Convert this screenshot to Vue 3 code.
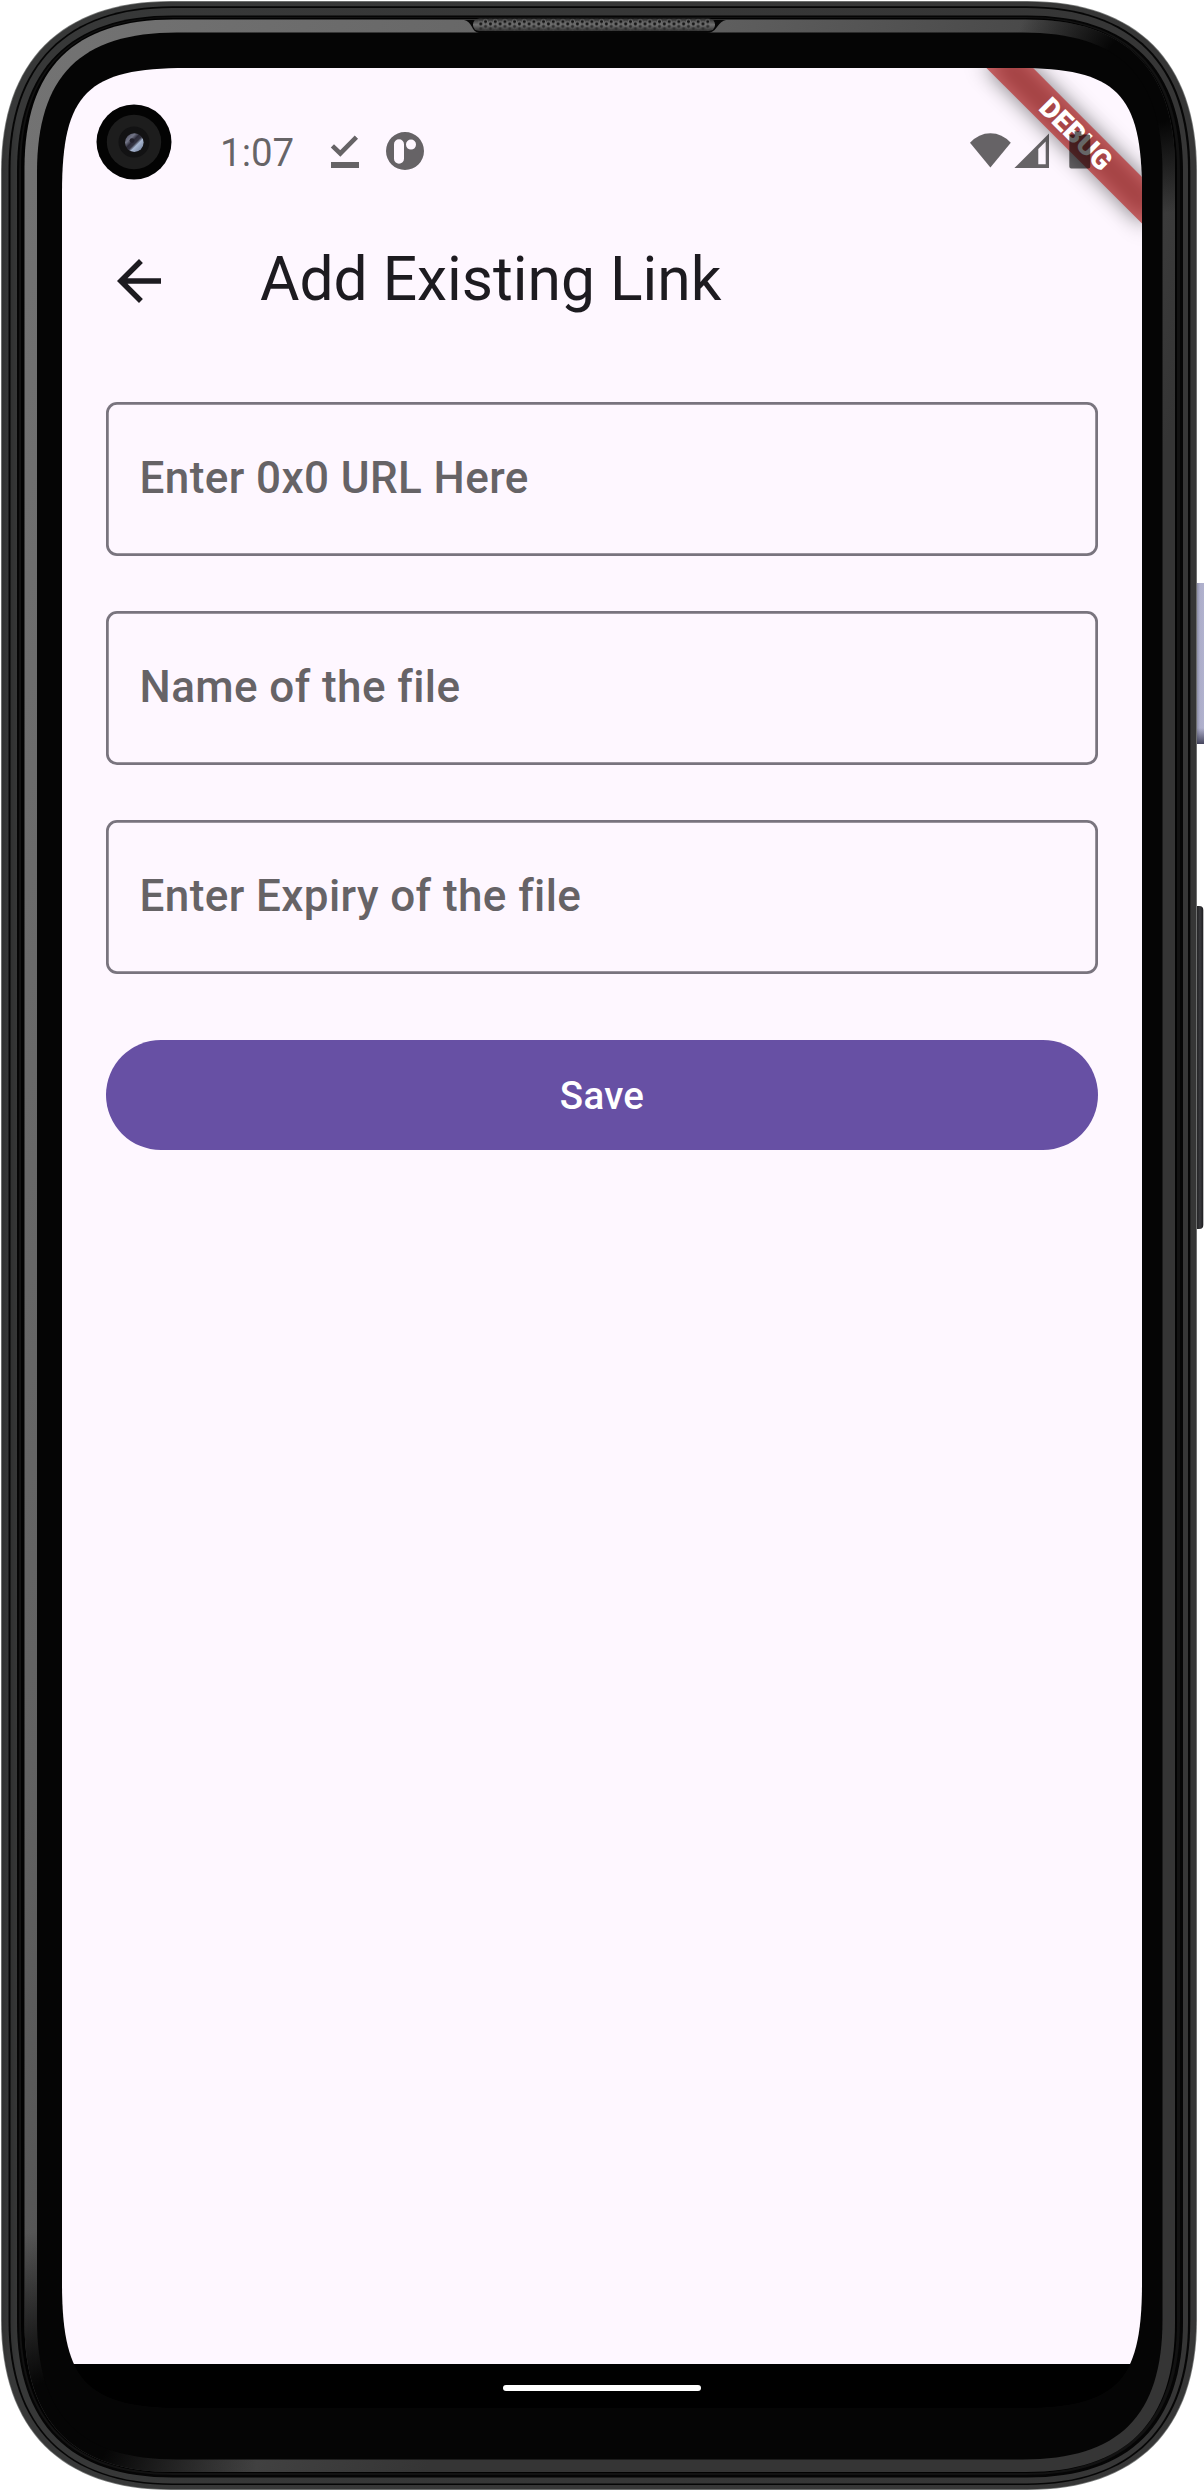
<script setup>
const fields = ['Enter 0x0 URL Here', 'Name of the file', 'Enter Expiry of the file']

// Closed contour with continuous-curvature corners: r is the corner extent, c the control offset.
function contour(l, t, r, b, e, k) {
  const c = e * k
  return `M${l + e} ${t}H${r - e}C${r - c} ${t} ${r} ${t + c} ${r} ${t + e}V${b - e}C${r} ${b - c} ${r - c} ${b} ${r - e} ${b}H${l + e}C${l + c} ${b} ${l} ${b - c} ${l} ${b - e}V${t + e}C${l} ${t + c} ${l + c} ${t} ${l + e} ${t}Z`
}

const rings = [
  { d: contour(1, 1, 1197, 2490, 170, 0.354), fill: '#7d7f7e' },
  { d: contour(1.8, 1.8, 1196.2, 2489.2, 169, 0.354), fill: 'url(#shell)' },
  { d: contour(8.5, 6.3, 1190.3, 2485, 164, 0.352), fill: '#060606' },
  { d: contour(10.5, 8, 1188, 2483.5, 162, 0.35), fill: 'url(#shell)' },
  { d: contour(17, 15.5, 1183, 2477.5, 156, 0.34), fill: '#050505' },
  { d: contour(19, 17, 1180, 2475, 154, 0.34), fill: '#121212' },
  { d: contour(21, 18, 1177, 2473, 152, 0.34), fill: '#020202' },
  { d: contour(24.5, 19.5, 1175, 2472, 149, 0.33), fill: 'url(#rim)' },
  { d: contour(24.5, 19.5, 1175, 2472, 149, 0.33), fill: 'url(#fadeTR)' },
  { d: contour(24.5, 19.5, 1175, 2472, 149, 0.33), fill: 'url(#fadeBL)' },
  { d: contour(37, 32.5, 1162.5, 2459.5, 140, 0.31), fill: '#050505' },
]
</script>

<template>
  <div class="device">
    <svg class="shell" width="1204" height="2491" viewBox="0 0 1204 2491">
      <defs>
        <linearGradient id="shell" x1="0" y1="0" x2="1" y2="0">
          <stop offset="0" stop-color="#303131" />
          <stop offset=".006" stop-color="#373838" />
          <stop offset="1" stop-color="#363636" />
        </linearGradient>
        <linearGradient id="rim" gradientUnits="userSpaceOnUse" x1="24" y1="0" x2="1175" y2="420">
          <stop offset="0" stop-color="#747474" />
          <stop offset=".5" stop-color="#626262" />
          <stop offset="1" stop-color="#353535" />
        </linearGradient>
        <radialGradient id="fadeTR" gradientUnits="userSpaceOnUse" cx="1152" cy="74" r="140">
          <stop offset="0" stop-color="#050505" />
          <stop offset=".35" stop-color="#050505" />
          <stop offset="1" stop-color="#050505" stop-opacity="0" />
        </radialGradient>
        <radialGradient id="fadeBL" gradientUnits="userSpaceOnUse" cx="60" cy="2430" r="200">
          <stop offset="0" stop-color="#050505" />
          <stop offset=".25" stop-color="#050505" />
          <stop offset="1" stop-color="#050505" stop-opacity="0" />
        </radialGradient>
        <linearGradient id="power" x1="0" y1="0" x2="1" y2="0">
          <stop offset="0" stop-color="#7d7d95" />
          <stop offset=".3" stop-color="#8e8fa8" />
          <stop offset=".5" stop-color="#adaeca" />
          <stop offset="1" stop-color="#b4b5d1" />
        </linearGradient>
        <linearGradient id="powerEnd" x1="0" y1="0" x2="0" y2="1">
          <stop offset="0" stop-color="#33334a" stop-opacity="0" />
          <stop offset="1" stop-color="#33334a" stop-opacity=".85" />
        </linearGradient>
        <linearGradient id="volume" x1="0" y1="0" x2="1" y2="0">
          <stop offset="0" stop-color="#222" />
          <stop offset=".6" stop-color="#29292b" />
          <stop offset=".75" stop-color="#39393d" />
          <stop offset="1" stop-color="#1c1c1e" />
        </linearGradient>
        <linearGradient id="grille" x1="0" y1="0" x2="0" y2="1">
          <stop offset="0" stop-color="#2c2c2c" />
          <stop offset=".5" stop-color="#707070" />
          <stop offset="1" stop-color="#303030" />
        </linearGradient>
        <pattern id="mesh" patternUnits="userSpaceOnUse" x="478.4" y="18.5" width="9.66" height="12">
          <g fill="#151515" stroke="#8c8c8c" stroke-width=".7">
            <circle cx="2.4" cy="5.4" r="2.1" />
            <circle cx="7.2" cy="3.1" r="2.1" />
            <circle cx="7.2" cy="8" r="1.9" fill="#2b2b2b" stroke="#626262" />
            <circle cx="2.4" cy="10.4" r="1.7" fill="#2b2b2b" stroke="#444" />
          </g>
        </pattern>
      </defs>
      <rect x="1193" y="583" width="14" height="161" rx="2" fill="url(#power)" />
      <rect x="1193" y="728" width="14" height="16" rx="2" fill="url(#powerEnd)" />
      <rect x="1190" y="906" width="13.3" height="323" rx="4" fill="url(#volume)" />
      <path v-for="(ring, i) in rings" :key="i" :d="ring.d" :fill="ring.fill" />
      <path d="M464 20H726Q721 21 717 27Q713 33 707 33H479Q474 32 472 27Q469 21 464 20Z" fill="#070707" />
      <rect x="473" y="18.5" width="242" height="12.5" rx="6" fill="url(#grille)" />
      <rect x="478.4" y="18.5" width="231.8" height="12" fill="url(#mesh)" />
    </svg>

    <main class="screen">
      <header class="status">
        <span class="clock">1:07</span>
        <svg class="done" width="30" height="36" viewBox="0 0 30 36">
          <path d="M2.4 12.8L10.3 20.4L26.4 4.2" fill="none" stroke="currentColor" stroke-width="4.6" />
          <path d="M1 29h28v6H1z" fill="currentColor" />
        </svg>
        <svg class="badge" width="38" height="38" viewBox="0 0 38 38">
          <path fill="currentColor" fill-rule="evenodd" d="M19 0a19 19 0 1 1 0 38a19 19 0 1 1 0-38zM13 7.2a5 5 0 0 0-5 5v14.6a5 5 0 0 0 10 0V12.2a5 5 0 0 0-5-5zM25 7.6a5 5 0 1 0 0 10a5 5 0 1 0 0-10z" />
        </svg>
        <svg class="system" width="122" height="40" viewBox="0 0 122 40">
          <path fill="currentColor" d="M0 12.8Q8.7 3.2 20.4 3.2T40.8 12.8L20.4 37.5Z" />
          <path fill="currentColor" fill-rule="evenodd" d="M44.4 38L79 3.6V38ZM68.3 19V34.2H75.7V11.6Z" />
          <path fill="currentColor" d="M104.6 1.3h6.8v3.2h6.9a2 2 0 0 1 2 2v30a2 2 0 0 1-2 2h-17a2 2 0 0 1-2-2v-30a2 2 0 0 1 2-2h3.3z" />
        </svg>
      </header>

      <nav class="appbar">
        <svg class="back" width="66" height="66" viewBox="0 0 24 24">
          <path fill="#1d1b20" d="M20 11H7.83l5.59-5.59L12 4l-8 8 8 8 1.41-1.41L7.83 13H20v-2z" />
        </svg>
        <h1>Add Existing Link</h1>
      </nav>

      <form class="form" @submit.prevent>
        <div v-for="label in fields" :key="label" class="field">{{ label }}</div>
        <button class="save" type="submit">Save</button>
      </form>

      <footer class="gesture"><i></i></footer>

      <div class="banner">
        <div class="banner-shadow"></div>
        <div class="banner-strip">DEBUG</div>
      </div>
    </main>

    <svg class="camera" width="76" height="76" viewBox="-38 -38 76 76">
      <defs>
        <linearGradient id="lens" x1="0" y1="0" x2="1" y2="1">
          <stop offset="0" stop-color="#3c3b4d" />
          <stop offset=".28" stop-color="#747789" />
          <stop offset=".42" stop-color="#2b2a38" />
          <stop offset=".54" stop-color="#343442" />
          <stop offset=".64" stop-color="#a9b8d2" />
          <stop offset="1" stop-color="#63708b" />
        </linearGradient>
      </defs>
      <circle r="37.5" fill="#030303" />
      <circle r="27.2" fill="#1d1d1d" />
      <circle r="15.5" fill="#121213" />
      <circle cx=".3" cy=".6" r="9.3" fill="url(#lens)" />
      <circle cx="-2" cy="-1.4" r="2.4" fill="#22212c" />
    </svg>
  </div>
</template>

<style>
body {
  margin: 0;
  background: #fff;
}
</style>

<style scoped>
.device {
  position: relative;
  box-sizing: border-box;
  width: 1204px;
  height: 2491px;
  padding: 68px 62px 83px;
  overflow: hidden;
  font-family: Roboto, "Liberation Sans", sans-serif;
}
.shell {
  position: absolute;
  inset: 0;
}
.screen {
  position: relative;
  display: flex;
  flex-direction: column;
  width: 1080px;
  height: 2340px;
  background: linear-gradient(#fef7ff 2296px, #000 2296px);
  clip-path: path("M125 0H955C1055 0 1080 25 1080 125V2215C1080 2315 1055 2340 955 2340H125C25 2340 0 2315 0 2215V125C0 25 25 0 125 0Z");
}
.status {
  position: relative;
  z-index: 2;
  box-sizing: border-box;
  display: flex;
  align-items: flex-start;
  height: 136px;
  padding: 62px 50px 0 158px;
  color: rgba(0, 0, 0, .6);
}
.clock {
  width: 110px;
  font-size: 38.5px;
  line-height: 45px;
}
.done {
  margin-top: 3px;
}
.badge {
  margin: 2px 0 0 26px;
}
.system {
  margin-left: auto;
}
.appbar {
  display: flex;
  align-items: center;
  height: 154px;
  padding-left: 44px;
}
h1 {
  margin: 0 0 3px 88px;
  font-size: 60.5px;
  font-weight: 400;
  line-height: 77px;
  color: #1d1b20;
}
.form {
  display: flex;
  flex: 1;
  flex-direction: column;
  gap: 55px;
  padding: 44px 44px 0;
}
.field {
  box-sizing: border-box;
  height: 154px;
  padding-left: 33.5px;
  border-radius: 11px;
  box-shadow: inset 0 0 0 2.75px #79747e;
  font-size: 44px;
  font-weight: 500;
  letter-spacing: .41px;
  line-height: 152px;
  color: #666366;
}
.save {
  height: 110px;
  margin-top: 11px;
  padding: 0;
  border: 0;
  border-radius: 55px;
  background: #6750a4;
  color: #fff;
  font-family: inherit;
  font-size: 38.5px;
  font-weight: 500;
  letter-spacing: .275px;
}
.gesture {
  display: flex;
  justify-content: center;
  height: 44px;
  background: #000;
}
.gesture i {
  width: 198px;
  height: 6px;
  margin-top: 21px;
  border-radius: 3px;
  background: #fff;
}
.banner {
  position: absolute;
  top: 0;
  right: 0;
  width: 0;
  height: 0;
  transform: rotate(45deg);
}
.banner-shadow,
.banner-strip {
  position: absolute;
  top: 77px;
  left: -110px;
  width: 220px;
  height: 33px;
}
.banner-shadow {
  background: rgba(0, 0, 0, .5);
  filter: blur(10.9px);
}
.banner-strip {
  background: rgba(183, 28, 28, .627);
  color: #fff;
  font-size: 28px;
  font-weight: 900;
  line-height: 33px;
  text-align: center;
}
.camera {
  position: absolute;
  top: 103.5px;
  left: 96px;
}
</style>
